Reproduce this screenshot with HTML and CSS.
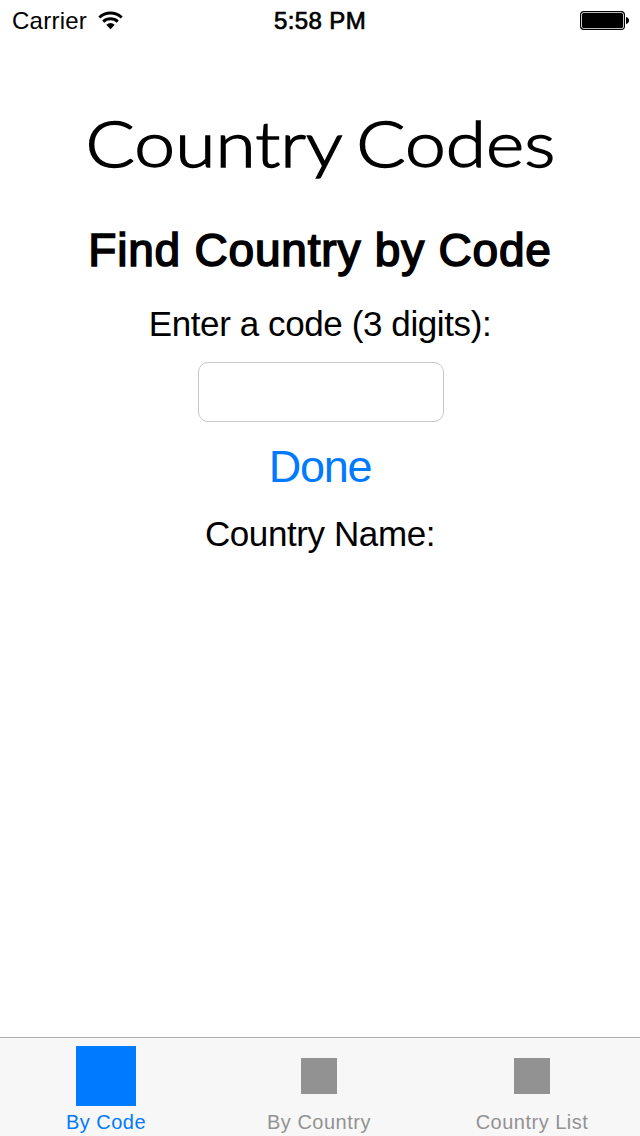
FILE: index.html
```html
<!DOCTYPE html>
<html lang="en">
<head>
<meta charset="utf-8">
<title>Country Codes</title>
<link rel="stylesheet" href="styles.css">
</head>
<body>
<div class="screen">
  <header class="status">
    <div class="carrier"><span class="carrier-name">Carrier</span>
      <svg class="wifi" width="26" height="20" viewBox="0 0 26 20"><g fill="none" stroke="#000" stroke-width="3"><path d="M1.300 6.500C7.500 .600 17.500 .600 23.700 6.500"/><path d="M5.200 10.600C9.200 6.900 15.800 6.900 19.800 10.600"/></g><path d="M8.300 13.800Q12.500 10.400 16.700 13.800L12.500 18.300Z"/></svg>
    </div>
    <div class="time"><span class="time-text">5:58 PM</span></div>
    <div class="power"><svg width="50" height="20" viewBox="0 0 50 20"><rect x=".6" y=".6" width="43.800" height="17.800" rx="3.200" fill="#fff" stroke="#000" stroke-width="1.200"/><rect x="2" y="2" width="41" height="15" rx="1.500"/><path d="M46 6Q49 6.700 49 9.500T46 13Z"/></svg></div>
  </header>
  <main class="content">
    <h1 class="title"><span class="title-text">Country Codes</span></h1>
    <h2 class="heading"><span class="heading-text">Find Country by Code</span></h2>
    <label class="label enter" for="code"><span class="enter-text">Enter a code (3 digits):</span></label>
    <input class="field" id="code" type="text">
    <button class="done" type="button"><span class="done-text">Done</span></button>
    <p class="label result"><span class="result-text">Country Name:</span></p>
  </main>
  <nav class="tabs">
    <div class="tab active"><span class="icon-slot"><span class="square large"></span></span><span class="tab-text">By Code</span></div>
    <div class="tab"><span class="icon-slot"><span class="square"></span></span><span class="tab-text">By Country</span></div>
    <div class="tab"><span class="icon-slot"><span class="square"></span></span><span class="tab-text">Country List</span></div>
  </nav>
</div>
</body>
</html>
```

FILE: styles.css
```css
* { box-sizing: border-box; }
body { margin: 0; background: #fff; color: #000; font-family: "Liberation Sans", Arial, sans-serif; }
.screen { width: 640px; height: 1136px; display: flex; flex-direction: column; overflow: hidden; }
.status { height: 40px; display: grid; grid-template-columns: 1fr 1fr 1fr; padding: 0 10px 0 12px; font-size: 24px; line-height: 41px; }
.carrier { display: flex; align-items: center; gap: 11px; }
.carrier-name { letter-spacing: .25px; }
.time { padding-right: 2px; text-align: center; letter-spacing: .4px; -webkit-text-stroke: .7px #000; }
.power { display: flex; justify-content: flex-end; align-items: center; }
.content { flex: 1; display: flex; flex-direction: column; align-items: center; }
.title, .heading, .label { margin: 0; white-space: nowrap; }
.title { margin-top: 64px; height: 96px; font: 300 64px/78px Papyrus, Lato, sans-serif; word-spacing: -4px; -webkit-text-stroke: 1.4px #000; }
.title-text { display: inline-block; transform: scaleX(1.143); }
.heading { margin-top: 20px; height: 60px; font-size: 46px; font-weight: 400; line-height: 60px; letter-spacing: .8px; -webkit-text-stroke: 1.6px #000; }
.label { height: 44px; font-size: 35px; line-height: 44px; letter-spacing: -.4px; }
.enter { margin-top: 22px; }
.field { width: 246px; height: 60px; margin: 16px 0 0 2px; border: 1px solid #c8c8c8; border-radius: 10px; background: #fff; padding: 0 14px; font: 28px "Liberation Sans", sans-serif; outline: 0; }
.done { margin-top: 20px; height: 50px; padding: 0; border: 0; background: none; color: #007aff; font: 45px/50px "Liberation Sans", Arial, sans-serif; letter-spacing: -1.3px; }
.result { margin-top: 20px; }
.tabs { height: 99px; display: grid; grid-template-columns: 212px 214px 212px; background: #f7f7f7; border-top: 1px solid #b2b2b2; color: #929292; font-size: 20px; }
.tab { display: flex; flex-direction: column; align-items: center; padding-top: 8px; }
.active { color: #007aff; }
.icon-slot { height: 60px; display: flex; align-items: center; }
.square { width: 36px; height: 36px; background: currentColor; }
.large { width: 60px; height: 60px; }
.tab-text { margin-top: 3px; line-height: 26px; letter-spacing: .5px; }
```
